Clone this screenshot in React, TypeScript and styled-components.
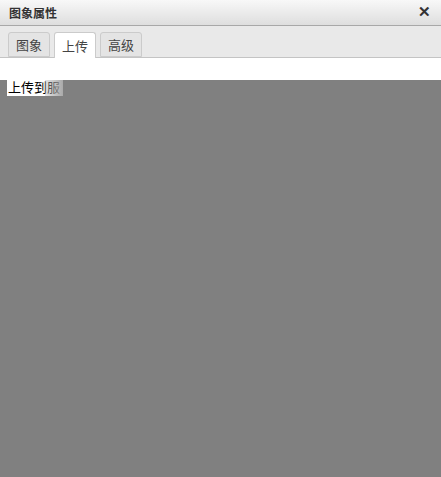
import styled, { createGlobalStyle } from "styled-components";

const GlobalStyle = createGlobalStyle`
  html, body {
    margin: 0;
    padding: 0;
    background: #808080;
  }
  body {
    font-family: "Liberation Sans", "Noto Sans CJK SC", sans-serif;
    font-size: 12px;
  }
`;

const Dialog = styled.div`
  width: 441px;
  height: 477px;
  display: flex;
  flex-direction: column;
  background: #808080;
  overflow: hidden;
`;

const TitleBar = styled.div`
  height: 26px;
  box-sizing: border-box;
  display: flex;
  align-items: center;
  justify-content: space-between;
  padding: 0 10px 0 9px;
  background: linear-gradient(#f8f8f8, #dedede);
  border-bottom: 1px solid #a8a8a8;
`;

const Title = styled.span`
  font-size: 12px;
  font-weight: bold;
  color: #333;
`;

const CloseButton = styled.span`
  font-size: 15px;
  font-weight: bold;
  color: #333;
  line-height: 1;
  margin-top: -3px;
`;

const TabBar = styled.div`
  height: 32px;
  box-sizing: border-box;
  display: flex;
  align-items: flex-end;
  gap: 4px;
  padding: 0 0 0 8px;
  background: #e9e9e9;
  border-bottom: 1px solid #c4c4c4;
`;

const Tab = styled.div<{ $active?: boolean }>`
  height: ${(p) => (p.$active ? "26px" : "25px")};
  margin-bottom: ${(p) => (p.$active ? "-1px" : "0")};
  box-sizing: border-box;
  padding: 0 7px;
  display: flex;
  align-items: center;
  font-size: 13px;
  color: #444;
  background: ${(p) => (p.$active ? "#fff" : "#e4e4e4")};
  border: 1px solid #cbcbcb;
  border-bottom: ${(p) => (p.$active ? "none" : "1px solid #cbcbcb")};
  border-radius: 3px 3px 0 0;
`;

const Blank = styled.div`
  height: 22px;
  background: #fff;
`;

const Body = styled.div`
  flex: 1;
  padding: 0 0 0 7px;
  background: #808080;
`;

const UploadLabel = styled.div`
  position: relative;
  width: 56px;
  height: 16px;
  white-space: nowrap;
  background: #fff;
  color: #000;
  font-size: 13px;
  line-height: 16px;
  padding-left: 1px;
  box-sizing: border-box;
`;

const Fade = styled.span`
  position: absolute;
  right: 0;
  top: 0;
  width: 18px;
  height: 16px;
  background: linear-gradient(90deg, rgba(180, 180, 180, 0.35), rgba(160, 160, 160, 0.9));
`;

export default function App() {
  return (
    <Dialog>
      <GlobalStyle />
      <TitleBar>
        <Title>图象属性</Title>
        <CloseButton>✕</CloseButton>
      </TitleBar>
      <TabBar>
        <Tab>图象</Tab>
        <Tab $active>上传</Tab>
        <Tab>高级</Tab>
      </TabBar>
      <Blank />
      <Body>
        <UploadLabel>
          上传到服
          <Fade />
        </UploadLabel>
      </Body>
    </Dialog>
  );
}
